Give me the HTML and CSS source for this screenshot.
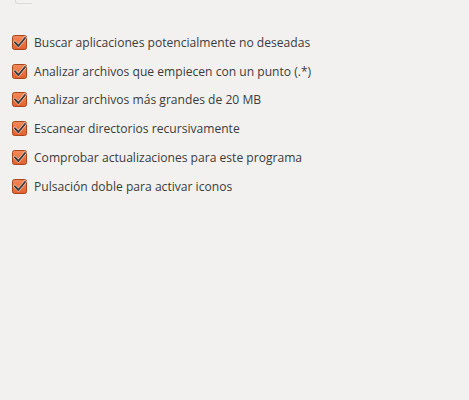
FILE: index.html
```html
<!DOCTYPE html>
<html lang="es">
<head>
  <meta charset="UTF-8">
  <title>Preferencias</title>
  <link rel="stylesheet" href="styles.css">
</head>
<body>
  <div class="prefs">
    <div class="top-stub"></div>
    <ul class="options">
      <li class="option">
        <svg class="check" width="15" height="15" viewBox="0 0 15 15"><use href="#cb"/></svg>
        <span>Buscar aplicaciones potencialmente no deseadas</span>
      </li>
      <li class="option">
        <svg class="check" width="15" height="15" viewBox="0 0 15 15"><use href="#cb"/></svg>
        <span>Analizar archivos que empiecen con un punto (.*)</span>
      </li>
      <li class="option">
        <svg class="check" width="15" height="15" viewBox="0 0 15 15"><use href="#cb"/></svg>
        <span>Analizar archivos más grandes de 20 MB</span>
      </li>
      <li class="option">
        <svg class="check" width="15" height="15" viewBox="0 0 15 15"><use href="#cb"/></svg>
        <span>Escanear directorios recursivamente</span>
      </li>
      <li class="option">
        <svg class="check" width="15" height="15" viewBox="0 0 15 15"><use href="#cb"/></svg>
        <span>Comprobar actualizaciones para este programa</span>
      </li>
      <li class="option">
        <svg class="check" width="15" height="15" viewBox="0 0 15 15"><use href="#cb"/></svg>
        <span>Pulsación doble para activar iconos</span>
      </li>
    </ul>
  </div>

  <!-- checkbox drawing shared by all rows -->
  <svg width="0" height="0" class="defs">
    <defs>
      <linearGradient id="cbfill" x1="0" y1="0" x2="0" y2="1">
        <stop offset="0" stop-color="#f58a5a"/>
        <stop offset="1" stop-color="#e2602d"/>
      </linearGradient>
      <symbol id="cb" viewBox="0 0 15 15">
        <rect x="0.5" y="0.5" width="14" height="14" rx="2" fill="url(#cbfill)" stroke="#a8471e"/>
        <path d="M3 7.3 L6.4 11 L13 3" fill="none" stroke="#ffffff" stroke-width="3.2" stroke-linejoin="round" stroke-linecap="round" opacity="0.6"/>
        <path d="M3 7.3 L6.4 11 L13 3" fill="none" stroke="#3c3c3c" stroke-width="1.9" stroke-linejoin="round" stroke-linecap="round"/>
      </symbol>
    </defs>
  </svg>
</body>
</html>
```

FILE: styles.css
```css
body {
  margin: 0;
  background: #f2f1f0;
  font-family: 'Open Sans', 'DejaVu Sans', sans-serif;
  font-size: 12.1px;
  color: #3c3c3c;
}

.prefs {
  padding: 0 12px;
}

.top-stub {
  width: 16px;
  height: 3px;
  margin-left: 3px;
  border-bottom: 1px solid #dcdad7;
  border-left: 1px solid #d8d6d3;
  border-radius: 0 0 0 3px;
}

.options {
  list-style: none;
  margin: 24px 0 0;
  padding: 0;
}

.option {
  display: flex;
  align-items: center;
  gap: 7px;
  height: 28.8px;
}

.check {
  flex: none;
}

.defs {
  position: absolute;
}
```
